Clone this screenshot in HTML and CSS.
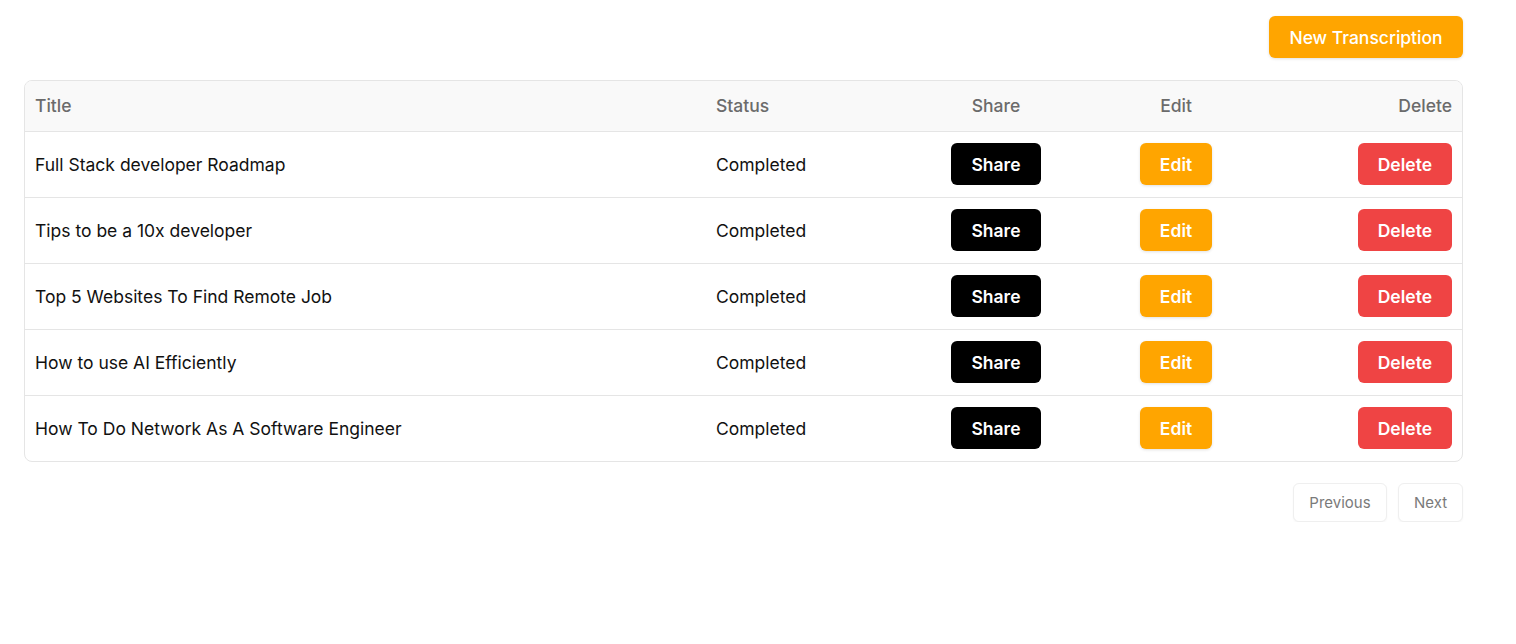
FILE: index.html
```html
<!DOCTYPE html>
<html lang="en">
<head>
<meta charset="utf-8">
<title>Transcriptions</title>
<link rel="stylesheet" href="styles.css">
</head>
<body>
<main class="page">
  <div class="toolbar">
    <button class="btn btn-orange btn-new">New Transcription</button>
  </div>
  <div class="table-wrap">
    <table class="table">
      <colgroup>
        <col class="c-title"><col class="c-status"><col class="c-share"><col class="c-edit"><col class="c-delete">
      </colgroup>
      <thead>
        <tr>
          <th class="left">Title</th>
          <th class="left">Status</th>
          <th class="center">Share</th>
          <th class="center">Edit</th>
          <th class="right">Delete</th>
        </tr>
      </thead>
      <tbody>
        <tr>
          <td class="left">Full Stack developer Roadmap</td>
          <td class="left">Completed</td>
          <td class="center"><button class="btn btn-black">Share</button></td>
          <td class="center"><button class="btn btn-orange">Edit</button></td>
          <td class="right"><button class="btn btn-red">Delete</button></td>
        </tr>
        <tr>
          <td class="left">Tips to be a 10x developer</td>
          <td class="left">Completed</td>
          <td class="center"><button class="btn btn-black">Share</button></td>
          <td class="center"><button class="btn btn-orange">Edit</button></td>
          <td class="right"><button class="btn btn-red">Delete</button></td>
        </tr>
        <tr>
          <td class="left">Top 5 Websites To Find Remote Job</td>
          <td class="left">Completed</td>
          <td class="center"><button class="btn btn-black">Share</button></td>
          <td class="center"><button class="btn btn-orange">Edit</button></td>
          <td class="right"><button class="btn btn-red">Delete</button></td>
        </tr>
        <tr>
          <td class="left">How to use AI Efficiently</td>
          <td class="left">Completed</td>
          <td class="center"><button class="btn btn-black">Share</button></td>
          <td class="center"><button class="btn btn-orange">Edit</button></td>
          <td class="right"><button class="btn btn-red">Delete</button></td>
        </tr>
        <tr>
          <td class="left">How To Do Network As A Software Engineer</td>
          <td class="left">Completed</td>
          <td class="center"><button class="btn btn-black">Share</button></td>
          <td class="center"><button class="btn btn-orange">Edit</button></td>
          <td class="right"><button class="btn btn-red">Delete</button></td>
        </tr>
      </tbody>
    </table>
  </div>
  <div class="pager">
    <button class="pg-btn pg-prev">Previous</button>
    <button class="pg-btn pg-next">Next</button>
  </div>
</main>
</body>
</html>
```
FILE: styles.css
```css
* { box-sizing: border-box; }
html, body { margin: 0; padding: 0; background: #fff; }
body {
  font-family: Inter, "Noto Sans", "Liberation Sans", sans-serif;
  color: #111;
  font-size: 17.5px;
}
.page {
  width: 1439px;
  margin-left: 24px;
  padding-top: 16px;
}
.toolbar {
  display: flex;
  justify-content: flex-end;
}
.btn {
  font-family: inherit;
  font-size: 17.5px;
  font-weight: 600;
  color: #fff;
  border: none;
  border-radius: 6px;
  height: 42px;
  padding: 1px 20px 0;
  cursor: pointer;
  line-height: 41px;
}
.btn-orange { background: #ffa500; box-shadow: 0 1px 3px rgba(0,0,0,0.12); }
.btn-black { background: #000; }
.btn-red { background: #ef4444; }
.btn-new { padding: 1px 10px 0; width: 194px; font-weight: 500; }
.table-wrap {
  margin-top: 22px;
  border: 1px solid #e5e5e5;
  border-radius: 8px;
  overflow: hidden;
}
.table {
  width: 100%;
  border-collapse: collapse;
  table-layout: fixed;
}
.c-title { width: 681px; }
.c-status { width: 200px; }
.c-share { width: 180px; }
.c-edit { width: 180px; }
.c-delete { width: auto; }
thead tr { background: #f9f9f9; height: 50px; }
th {
  font-weight: 500;
  color: #6b6b6b;
  padding: 0 10px;
  border-bottom: 1px solid #e5e5e5;
}
tbody tr { height: 66px; }
tbody tr + tr td { border-top: 1px solid #e5e5e5; }
td { padding: 0 10px; color: #111; }
.left { text-align: left; }
.center { text-align: center; }
.right { text-align: right; }
.pager {
  margin-top: 21px;
  display: flex;
  justify-content: flex-end;
  gap: 11px;
}
.pg-btn {
  font-family: inherit;
  font-size: 15px;
  color: #7a7a7a;
  background: #fff;
  border: 1px solid #efefef;
  border-radius: 6px;
  height: 39px;
  padding: 0 10px;
  box-shadow: 0 1px 2px rgba(0,0,0,0.04);
}
.pg-prev { width: 94px; }
.pg-next { width: 65px; }
```
